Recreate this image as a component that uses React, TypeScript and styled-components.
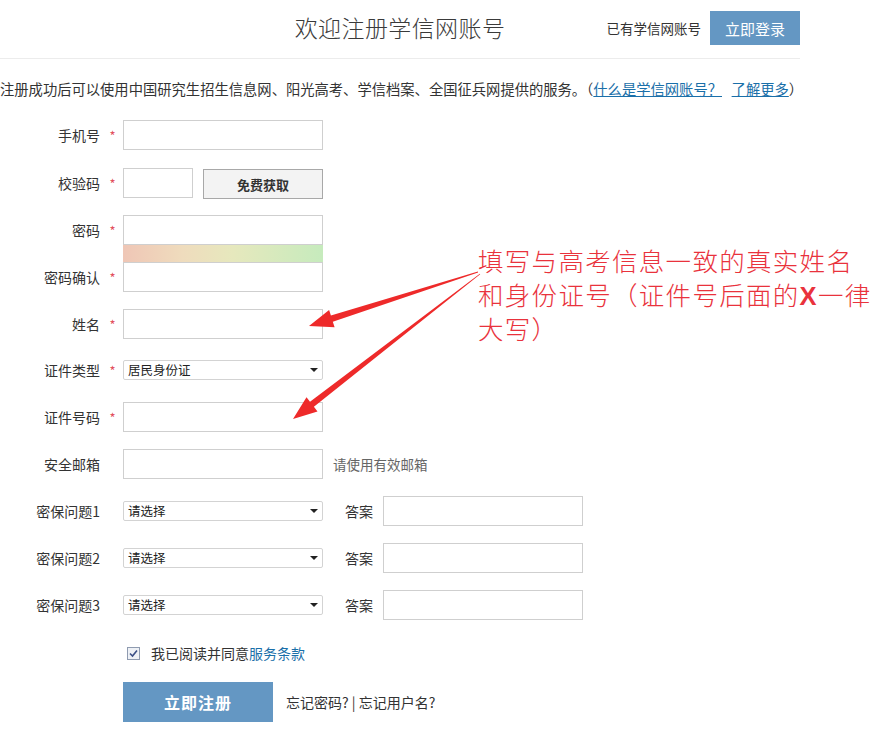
import React from "react";
import styled, { createGlobalStyle } from "styled-components";

const FONT = `"Noto Sans CJK SC", "Liberation Sans", sans-serif`;

const GlobalStyle = createGlobalStyle`
  html, body {
    margin: 0;
    padding: 0;
    background: #fff;
  }
  body {
    font-family: ${FONT};
    color: #333;
  }
  * { box-sizing: border-box; }
`;

type Point = [number, number];

// tapered arrow: thin tail, widening shaft, triangular head
function arrowPoints(tail: Point, tip: Point): string {
  const [tx, ty] = tail;
  const [px, py] = tip;
  const dx = px - tx;
  const dy = py - ty;
  const len = Math.hypot(dx, dy);
  const ux = dx / len;
  const uy = dy / len;
  const nx = -uy;
  const ny = ux;
  const headLen = 24;
  const headHalf = 9;
  const shaftEnd = 3.2;
  const bx = px - ux * headLen;
  const by = py - uy * headLen;
  const pts: Point[] = [
    [tx + nx * 0.4, ty + ny * 0.4],
    [bx + nx * shaftEnd, by + ny * shaftEnd],
    [bx + nx * headHalf, by + ny * headHalf],
    [px, py],
    [bx - nx * headHalf, by - ny * headHalf],
    [bx - nx * shaftEnd, by - ny * shaftEnd],
    [tx - nx * 0.4, ty - ny * 0.4],
  ];
  return pts.map(([x, y]) => `${x.toFixed(1)},${y.toFixed(1)}`).join(" ");
}

const Page = styled.div`
  position: relative;
  width: 872px;
  min-height: 735px;
  background: #fff;
`;

const Header = styled.header`
  width: 800px;
  height: 59px;
  display: grid;
  grid-template-columns: 1fr auto 1fr;
  align-items: center;
  border-bottom: 1px solid #ececec;
  padding-bottom: 4px;
`;

const Title = styled.h1`
  grid-column: 2;
  margin: 0;
  font-size: 23px;
  font-weight: 300;
  color: #3a3a3a;
  letter-spacing: 0.4px;
`;

const HeaderRight = styled.div`
  grid-column: 3;
  display: flex;
  justify-content: flex-end;
  align-items: center;
  gap: 9px;
  font-size: 13.5px;
  color: #333;
  padding-top: 2px;
`;

const LoginButton = styled.button`
  width: 90px;
  height: 34px;
  border: none;
  background: #6497c3;
  color: #fff;
  font-family: ${FONT};
  font-size: 15px;
  padding: 0;
`;

const Intro = styled.p`
  margin: 0;
  padding-top: 20px;
  height: 61px;
  font-size: 14.3px;
  line-height: 20px;
  color: #333;
  white-space: nowrap;

  a {
    color: #1a6fa9;
    text-decoration: underline;
  }
`;

const Form = styled.form`
  display: flex;
  flex-direction: column;
`;

const Row = styled.div<{ $gap?: number }>`
  display: grid;
  grid-template-columns: 100px 23px auto;
  align-items: center;
  height: 30px;
  margin-bottom: ${(p) => (p.$gap ?? 17)}px;
`;

const Label = styled.label`
  text-align: right;
  font-size: 14px;
  color: #333;
`;

const Star = styled.span`
  text-align: center;
  padding-left: 2px;
  color: #e2505c;
  font-size: 13px;
`;

const Controls = styled.div`
  display: flex;
  align-items: center;
`;

const Input = styled.input<{ $w?: number }>`
  display: block;
  width: ${(p) => p.$w ?? 200}px;
  height: 30px;
  border: 1px solid #cfcfcf;
  background: #fff;
  padding: 0 5px;
  font-family: ${FONT};
  font-size: 13px;
  outline: none;
`;

const CodeButton = styled.button`
  width: 120px;
  height: 30px;
  margin-left: 10px;
  margin-top: 2px;
  border: 1px solid #a8a8a8;
  background: #f3f3f3;
  font-family: ${FONT};
  font-size: 13px;
  font-weight: 700;
  color: #333;
  padding: 0;
`;

const StrengthBar = styled.div`
  margin-left: 123px;
  width: 200px;
  height: 17px;
  background: linear-gradient(90deg, #efc6b6 0%, #efdcbd 30%, #e6e8bd 55%, #c6ebbd 100%);
`;

const SelectWrap = styled.div`
  position: relative;
  width: 200px;
  height: 20px;
`;

const Select = styled.select`
  display: block;
  appearance: none;
  width: 200px;
  height: 20px;
  border: 1px solid #d3d3d3;
  border-radius: 2px;
  background: #fff;
  padding: 0 4px;
  font-family: ${FONT};
  font-size: 12.5px;
  line-height: 18px;
  color: #222;
  outline: none;
`;

const Caret = styled.span`
  position: absolute;
  right: 5px;
  top: 8px;
  width: 0;
  height: 0;
  border-left: 4px solid transparent;
  border-right: 4px solid transparent;
  border-top: 4px solid #222;
  pointer-events: none;
`;

const Hint = styled.span`
  margin-left: 10px;
  font-size: 13.5px;
  color: #666;
`;

const AnswerLabel = styled.span`
  margin-left: 22px;
  margin-right: 10px;
  font-size: 14px;
  color: #333;
`;

const AgreeRow = styled.div`
  display: flex;
  align-items: center;
  height: 24px;
  margin-top: 21px;
  margin-left: 127px;
  font-size: 14px;
  color: #333;

  a {
    color: #1a6fa9;
    text-decoration: none;
  }
`;

const CheckBox = styled.span`
  width: 13px;
  height: 13px;
  margin-right: 11px;
  border: 1px solid #8f9bb0;
  background: #eef1f6;
  display: flex;
  align-items: center;
  justify-content: center;
`;

const SubmitRow = styled.div`
  display: flex;
  align-items: center;
  margin-top: 17px;
  margin-left: 123px;
  font-size: 14px;
  color: #333;
`;

const SubmitButton = styled.button`
  width: 150px;
  height: 40px;
  border: none;
  background: #6497c3;
  color: #fff;
  font-family: ${FONT};
  font-size: 16px;
  font-weight: 700;
  letter-spacing: 1px;
  margin-right: 13px;
  padding: 0;
`;

const Note = styled.div`
  position: absolute;
  left: 478px;
  top: 243px;
  font-size: 25.5px;
  color: #e9323c;
  white-space: nowrap;
  font-weight: 300;
  letter-spacing: 1.3px;

  b {
    font-family: "Liberation Sans", sans-serif;
    font-weight: 700;
  }
`;

const NoteLine = styled.div`
  height: 34px;
  line-height: 34px;
`;

const ArrowLayer = styled.svg`
  position: absolute;
  left: 0;
  top: 0;
  pointer-events: none;
`;

const questions = ["密保问题1", "密保问题2", "密保问题3"];

export default function App() {
  return (
    <>
      <GlobalStyle />
      <Page>
        <Header>
          <Title>欢迎注册学信网账号</Title>
          <HeaderRight>
            <span>已有学信网账号</span>
            <LoginButton type="button">立即登录</LoginButton>
          </HeaderRight>
        </Header>

        <Intro>
          注册成功后可以使用中国研究生招生信息网、阳光高考、学信档案、全国征兵网提供的服务。（
          <a href="#">什么是学信网账号？</a>&nbsp;&nbsp;&nbsp;<a href="#">了解更多</a>）
        </Intro>

        <Form onSubmit={(e) => e.preventDefault()}>
          <Row>
            <Label>手机号</Label>
            <Star>*</Star>
            <Input />
          </Row>
          <Row $gap={18}>
            <Label>校验码</Label>
            <Star>*</Star>
            <Controls>
              <Input $w={70} />
              <CodeButton type="button">免费获取</CodeButton>
            </Controls>
          </Row>
          <Row $gap={0}>
            <Label>密码</Label>
            <Star>*</Star>
            <Input type="password" />
          </Row>
          <StrengthBar />
          <Row>
            <Label>密码确认</Label>
            <Star>*</Star>
            <Input type="password" />
          </Row>
          <Row $gap={16}>
            <Label>姓名</Label>
            <Star>*</Star>
            <Input />
          </Row>
          <Row>
            <Label>证件类型</Label>
            <Star>*</Star>
            <SelectWrap>
              <Select defaultValue="id">
                <option value="id">居民身份证</option>
              </Select>
              <Caret />
            </SelectWrap>
          </Row>
          <Row>
            <Label>证件号码</Label>
            <Star>*</Star>
            <Input />
          </Row>
          <Row>
            <Label>安全邮箱</Label>
            <span />
            <Controls>
              <Input />
              <Hint>请使用有效邮箱</Hint>
            </Controls>
          </Row>
          {questions.map((q, i) => (
            <Row key={q} $gap={i === questions.length - 1 ? 0 : 17}>
              <Label>{q}</Label>
              <span />
              <Controls>
                <SelectWrap>
                  <Select defaultValue="">
                    <option value="">请选择</option>
                  </Select>
                  <Caret />
                </SelectWrap>
                <AnswerLabel>答案</AnswerLabel>
                <Input />
              </Controls>
            </Row>
          ))}

          <AgreeRow>
            <CheckBox>
              <svg width="9" height="9" viewBox="0 0 9 9">
                <path d="M1 4.5 L3.5 7 L8 1.5" fill="none" stroke="#3b4f86" strokeWidth="1.6" />
              </svg>
            </CheckBox>
            <span>
              我已阅读并同意<a href="#">服务条款</a>
            </span>
          </AgreeRow>

          <SubmitRow>
            <SubmitButton type="submit">立即注册</SubmitButton>
            <span>忘记密码? | 忘记用户名?</span>
          </SubmitRow>
        </Form>

        <ArrowLayer width="872" height="735" viewBox="0 0 872 735">
          <polygon points={arrowPoints([478, 272], [309, 326])} fill="#ee2a2a" />
          <polygon points={arrowPoints([480, 274], [293, 419])} fill="#ee2a2a" />
        </ArrowLayer>

        <Note>
          <NoteLine>填写与高考信息一致的真实姓名</NoteLine>
          <NoteLine>
            和身份证号（证件号后面的<b>X</b>一律
          </NoteLine>
          <NoteLine>大写）</NoteLine>
        </Note>
      </Page>
    </>
  );
}
